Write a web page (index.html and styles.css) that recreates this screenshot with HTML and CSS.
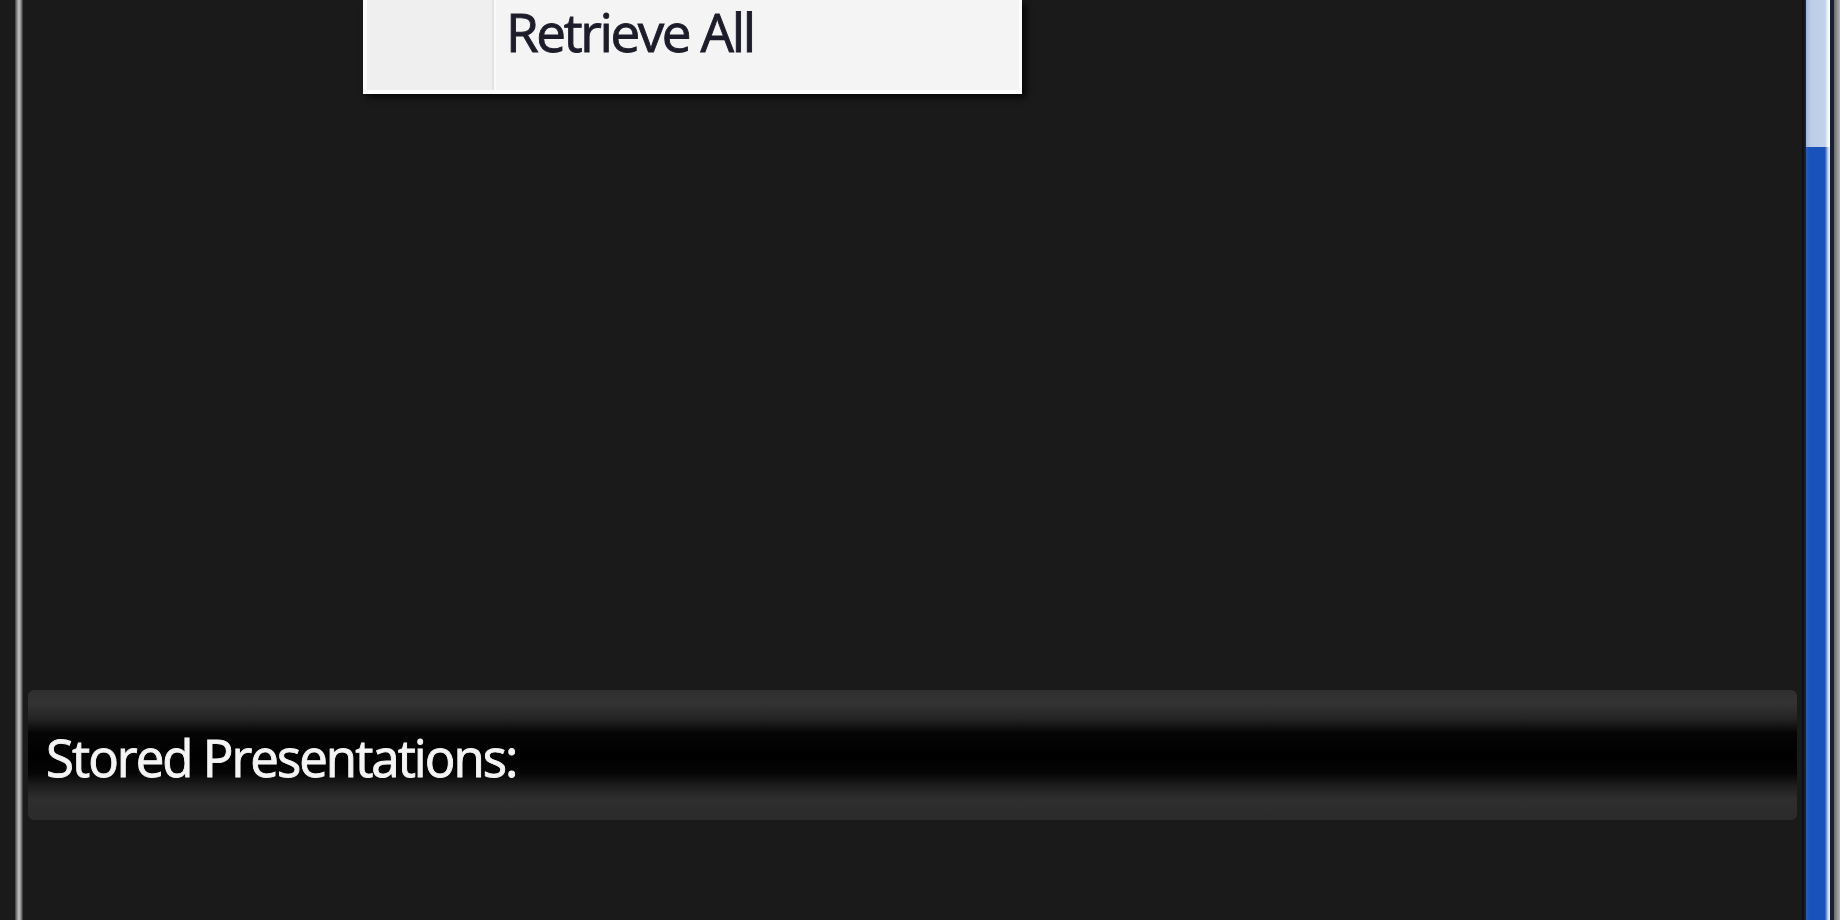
FILE: index.html
```html
<!DOCTYPE html>
<html>
<head>
<meta charset="utf-8">
<link rel="stylesheet" href="styles.css">
</head>
<body>
<div class="window">
  <div class="edge-left"><div class="edge-line"></div></div>
  <div class="content">
    <div class="upper">
      <div class="menu">
        <div class="menu-gutter"></div>
        <div class="menu-body">
          <div class="menu-item">Retrieve All</div>
        </div>
      </div>
    </div>
    <div class="section-bar">
      <span class="section-title">Stored Presentations:</span>
    </div>
    <div class="lower"></div>
  </div>
  <div class="scrollbar">
    <div class="sb-border"></div>
    <div class="sb-track">
      <div class="sb-light"></div>
      <div class="sb-thumb"></div>
    </div>
    <div class="sb-dark"></div>
    <div class="sb-gray"></div>
  </div>
</div>
</body>
</html>
```

FILE: styles.css
```css
html, body {
  margin: 0;
  padding: 0;
  background: #1a1a1a;
}
.window {
  display: flex;
  width: 1840px;
  height: 920px;
  overflow: hidden;
  background: #1a1a1a;
}
.edge-left {
  width: 24px;
  display: flex;
  padding-left: 15px;
  box-sizing: border-box;
}
.edge-line {
  width: 8px;
  background: linear-gradient(90deg, #3a3a3a 0%, #8a8a8a 25%, #c4c4c4 50%, #8a8a8a 75%, #2a2a2a 100%);
}
.content {
  flex: 1;
  display: flex;
  flex-direction: column;
  padding: 0 5px 0 4px;
}
.upper {
  position: relative;
  height: 690px;
}
.menu {
  position: absolute;
  left: 335px;
  top: 0;
  width: 659px;
  height: 94px;
  display: flex;
  box-sizing: border-box;
  border-left: 4px solid #fbfbfb;
  border-right: 3px solid #fbfbfb;
  border-bottom: 4px solid #fdfdfd;
  background: #f4f4f4;
  box-shadow: 4px 4px 6px rgba(0, 0, 0, 0.75);
}
.menu-gutter {
  width: 125px;
  background: #efefef;
  border-right: 2px solid #e2e2e2;
  box-shadow: 2px 0 0 #fafafa;
}
.menu-body {
  flex: 1;
  padding-left: 12px;
}
.menu-item {
  font-family: "Open Sans", "Noto Sans", sans-serif;
  font-size: 53px;
  letter-spacing: -2.4px;
  -webkit-text-stroke: 0.9px #1c1c2a;
  color: #1c1c2a;
  line-height: 59px;
  padding-top: 2px;
}
.section-bar {
  height: 130px;
  border-radius: 6px;
  box-sizing: border-box;
  display: flex;
  align-items: center;
  padding-left: 18px;
  background: linear-gradient(180deg, #2f2f2f 0%, #333333 10%, #242424 22%, #050505 33%, #000000 50%, #050505 64%, #1e1e1e 74%, #2e2e2e 84%, #2b2b2b 100%);
}
.section-title {
  font-family: "Open Sans", "Noto Sans", sans-serif;
  font-size: 51px;
  letter-spacing: -2px;
  -webkit-text-stroke: 0.9px #f4f4f4;
  color: #f4f4f4;
  line-height: 1;
  margin-top: 4px;
}
.lower {
  flex: 1;
}
.scrollbar {
  width: 38px;
  display: flex;
}
.sb-border {
  width: 4px;
  background: linear-gradient(90deg, #0a0a0a, #1a2840);
}
.sb-track {
  width: 24px;
  display: flex;
  flex-direction: column;
}
.sb-light {
  height: 147px;
  background: linear-gradient(90deg, #9fb7dc 0%, #bccde8 20%, #c2d2ea 80%, #eef3fb 90%, #ffffff 100%);
}
.sb-thumb {
  flex: 1;
  background: linear-gradient(90deg, #2a5cbc 0%, #1a51ba 15%, #1a52bb 78%, #5b84d0 84%, #c6d6f0 92%, #e8eef8 100%);
}
.sb-dark {
  width: 4px;
  background: #1a2030;
}
.sb-gray {
  width: 6px;
  background: linear-gradient(90deg, #6a6a6a, #b4b4b4);
}
```
